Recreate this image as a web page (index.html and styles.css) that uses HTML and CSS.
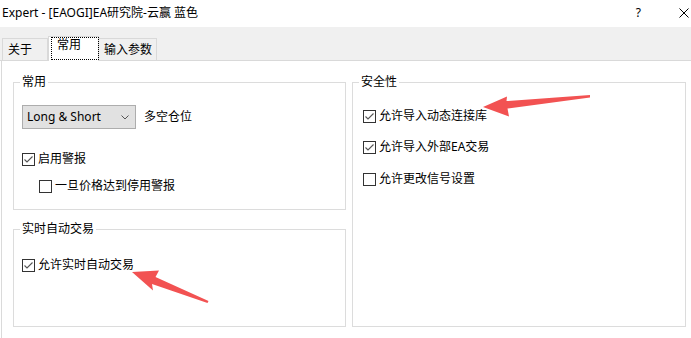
FILE: index.html
```html
<!DOCTYPE html>
<html lang="zh-CN">
<head>
<meta charset="utf-8">
<title>Expert</title>
<link rel="stylesheet" href="styles.css">
</head>
<body>
<div class="window">
  <div class="titlebar">
    <span class="title">Expert - [EAOGI]EA研究院-云赢 蓝色</span>
    <div class="title-actions">
      <span class="help">?</span>
      <svg class="close" width="10" height="10" viewBox="0 0 10 10"><path d="M0.5 0.5 L9.5 9.5 M9.5 0.5 L0.5 9.5" stroke="#000" stroke-width="1" fill="none"/></svg>
    </div>
  </div>
  <div class="tabstrip">
    <div class="tab tab-about">关于</div>
    <div class="tab tab-active"><span class="focus">常用</span></div>
    <div class="tab tab-inputs">输入参数</div>
  </div>
  <div class="content">
    <div class="col-left">
      <fieldset class="group group-common">
        <legend>常用</legend>
        <div class="group-body body-common">
          <div class="combo-row">
            <div class="combo">
              <span>Long &amp; Short</span>
              <svg class="chev" width="8" height="5" viewBox="0 0 8 5"><polyline points="0.5,0.5 4,4 7.5,0.5" fill="none" stroke="#555" stroke-width="1"/></svg>
            </div>
            <span class="combo-label">多空仓位</span>
          </div>
          <div class="check-row row-alert">
            <svg class="cb" width="13" height="13" viewBox="0 0 13 13"><rect x="0.5" y="0.5" width="12" height="12" fill="#fff" stroke="#333"/><polyline points="2.5,6.5 5,9 10.5,3.5" fill="none" stroke="#555" stroke-width="1.1"/></svg>
            <span>启用警报</span>
          </div>
          <div class="check-row row-indent">
            <svg class="cb" width="13" height="13" viewBox="0 0 13 13"><rect x="0.5" y="0.5" width="12" height="12" fill="#fff" stroke="#333"/></svg>
            <span>一旦价格达到停用警报</span>
          </div>
        </div>
      </fieldset>
      <fieldset class="group group-live">
        <legend>实时自动交易</legend>
        <div class="group-body body-live">
          <div class="check-row">
            <svg class="cb" width="13" height="13" viewBox="0 0 13 13"><rect x="0.5" y="0.5" width="12" height="12" fill="#fff" stroke="#333"/><polyline points="2.5,6.5 5,9 10.5,3.5" fill="none" stroke="#555" stroke-width="1.1"/></svg>
            <span>允许实时自动交易</span>
          </div>
        </div>
      </fieldset>
    </div>
    <fieldset class="group group-security">
      <legend>安全性</legend>
      <div class="group-body body-security">
        <div class="check-row sec-1">
          <svg class="cb" width="13" height="13" viewBox="0 0 13 13"><rect x="0.5" y="0.5" width="12" height="12" fill="#fff" stroke="#333"/><polyline points="2.5,6.5 5,9 10.5,3.5" fill="none" stroke="#555" stroke-width="1.1"/></svg>
          <span>允许导入动态连接库</span>
        </div>
        <div class="check-row sec-2">
          <svg class="cb" width="13" height="13" viewBox="0 0 13 13"><rect x="0.5" y="0.5" width="12" height="12" fill="#fff" stroke="#333"/><polyline points="2.5,6.5 5,9 10.5,3.5" fill="none" stroke="#555" stroke-width="1.1"/></svg>
          <span>允许导入外部EA交易</span>
        </div>
        <div class="check-row sec-3">
          <svg class="cb" width="13" height="13" viewBox="0 0 13 13"><rect x="0.5" y="0.5" width="12" height="12" fill="#fff" stroke="#333"/></svg>
          <span>允许更改信号设置</span>
        </div>
      </div>
    </fieldset>
  </div>
  <svg class="annotations" width="691" height="338" viewBox="0 0 691 338">
    <polygon points="483,107 507,96.5 506.5,101 590,95 590,97.5 507.5,108.5 509,116.5" fill="#f25252"/>
    <polygon points="132,272 159,270.5 155.5,277 208.5,301 207.5,303 152,284 153,290.5" fill="#f25252"/>
  </svg>
</div>
</body>
</html>
```

FILE: styles.css
```css
html, body {
  margin: 0;
  padding: 0;
  background: #fff;
}

body {
  font-family: "Noto Sans", "Noto Sans CJK SC", sans-serif;
  font-size: 12px;
  color: #000;
}

.window {
  position: relative;
  width: 691px;
  height: 338px;
  overflow: hidden;
  background: #fff;
}

.titlebar {
  height: 27px;
  display: flex;
  align-items: center;
  justify-content: space-between;
  padding: 0 2px 1px 2px;
  box-sizing: border-box;
  line-height: 16px;
}

.title-actions {
  display: flex;
  align-items: center;
}

.help {
  font-size: 12px;
  line-height: 16px;
}

.close {
  display: block;
  margin-left: 38px;
}

.tabstrip {
  height: 34px;
  box-sizing: border-box;
  background: #f0f0f0;
  border-bottom: 1px solid #d9d9d9;
  display: flex;
  align-items: flex-end;
  padding-left: 2px;
}

.tab {
  box-sizing: border-box;
  height: 22px;
  border: 1px solid #d9d9d9;
  border-bottom: none;
  background: #f0f0f0;
  line-height: 20px;
  padding-top: 1px;
  padding-left: 5px;
  white-space: nowrap;
}

.tab-about {
  width: 46px;
}

.tab-inputs {
  width: 58px;
  border-left: none;
  padding-left: 5px;
}

.tab-active {
  width: 51px;
  height: 25px;
  margin-bottom: -1px;
  background: #fff;
  border-left: 1px solid #d9d9d9;
  border-right: 1px solid #d9d9d9;
  padding: 0 0 0 2px;
  position: relative;
  z-index: 1;
}

.focus {
  display: block;
  box-sizing: border-box;
  width: 48px;
  height: 23px;
  border: 1px dotted #000;
  line-height: 14px;
  padding-left: 5px;
}

.content {
  margin-left: 1px;
  border-left: 1px solid #dadada;
  height: 277px;
  box-sizing: border-box;
  padding: 13px 0 0 11px;
  display: grid;
  grid-template-columns: 333px 334px;
  column-gap: 6px;
  align-items: start;
}

.col-left {
  display: flex;
  flex-direction: column;
  gap: 11px;
}

.group {
  margin: 0;
  padding: 0;
  min-width: 0;
  box-sizing: border-box;
  border: 1px solid #dcdcdc;
}

.group legend {
  margin-left: 6px;
  padding: 0 2px;
  line-height: 16px;
  font-size: 12px;
}

.group-common {
  height: 136px;
}

.group-live {
  height: 106px;
}

.group-security {
  height: 253px;
}

.body-common {
  padding-left: 8px;
}

.body-live {
  padding-left: 8px;
}

.body-security {
  padding-left: 10px;
}

.combo-row {
  margin-top: 15px;
  display: flex;
  align-items: center;
}

.combo {
  box-sizing: border-box;
  width: 114px;
  height: 24px;
  background: #e1e1e1;
  border: 1px solid #adadad;
  display: flex;
  align-items: center;
  justify-content: space-between;
  padding: 0 6px 0 4px;
  line-height: 16px;
}

.chev {
  display: block;
  margin-top: 1px;
}

.combo-label {
  margin-left: 8px;
  line-height: 16px;
}

.check-row {
  display: flex;
  align-items: center;
  height: 16px;
  line-height: 16px;
  white-space: nowrap;
}

.check-row .cb {
  display: block;
  flex: none;
  margin-right: 3px;
}

.row-alert {
  margin-top: 22px;
}

.row-indent {
  margin-top: 11px;
  padding-left: 17px;
}

.body-live .check-row {
  margin-top: 20px;
}

.sec-1 {
  margin-top: 18px;
}

.sec-2 {
  margin-top: 15px;
}

.sec-3 {
  margin-top: 16px;
}

.annotations {
  position: absolute;
  left: 0;
  top: 0;
  pointer-events: none;
}
```
